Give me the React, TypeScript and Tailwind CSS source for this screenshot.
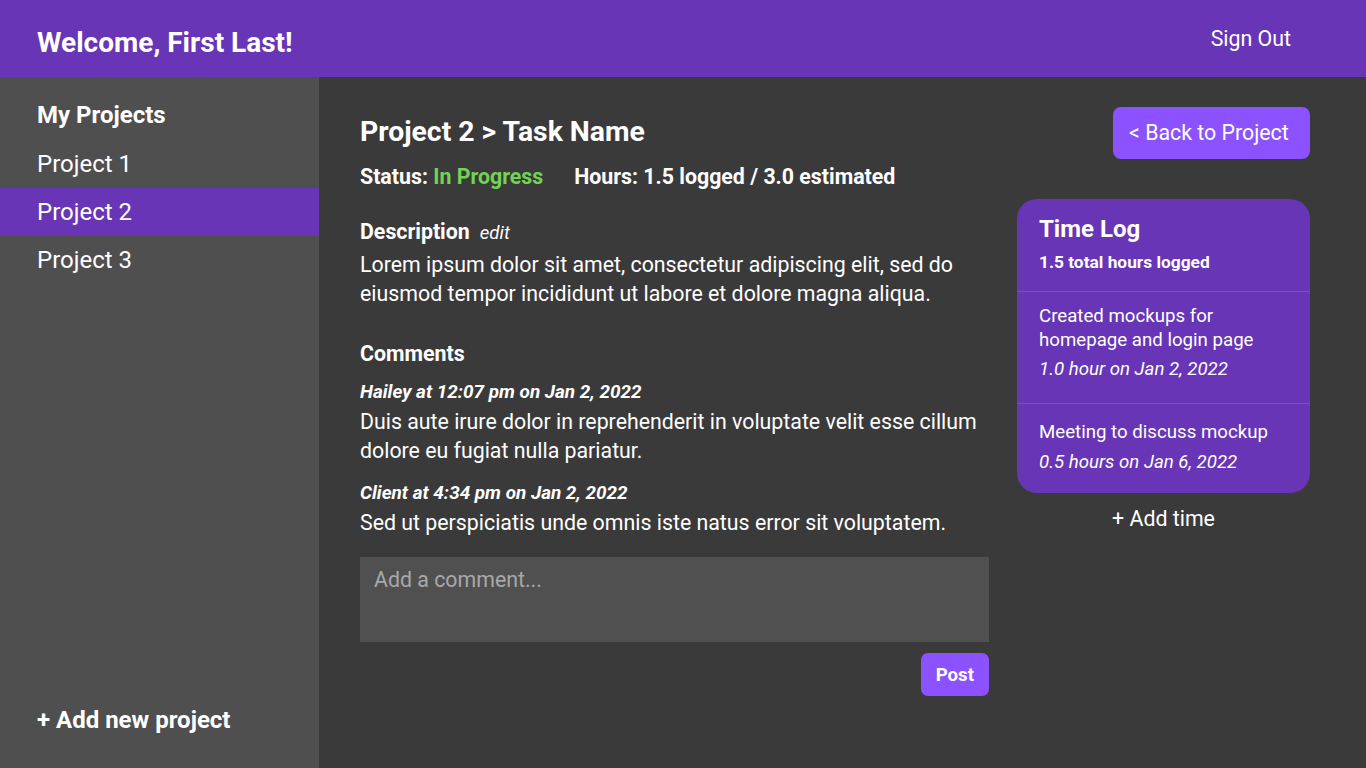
import React from "react";

const projects = ["Project 1", "Project 2", "Project 3"];

const logs = [
  { text: "Created mockups for homepage and login page", meta: "1.0 hour on Jan 2, 2022", pt: "pt-[12px]", pb: "pb-[22px]", gap: "mt-[5px]" },
  { text: "Meeting to discuss mockup", meta: "0.5 hours on Jan 6, 2022", pt: "pt-[16px]", pb: "pb-[19px]", gap: "mt-[6px]" },
];

const comments = [
  { who: "Hailey at 12:07 pm on Jan 2, 2022", body: "Duis aute irure dolor in reprehenderit in voluptate velit esse cillum dolore eu fugiat nulla pariatur." },
  { who: "Client at 4:34 pm on Jan 2, 2022", body: "Sed ut perspiciatis unde omnis iste natus error sit voluptatem." },
];

const App: React.FC = () => {
  return (
    <div className="flex h-[768px] w-[1366px] flex-col overflow-hidden bg-[#3a3a3a] font-['Roboto',sans-serif] text-white">
      {/* HEADER */}
      <header className="flex h-[77px] shrink-0 items-start justify-between bg-[#6735b5] pl-[37px] pr-[75px]">
        <h1 className="mt-[26px] text-[28px] font-bold leading-[34px]">Welcome, First Last!</h1>
        <button className="mt-[25px] text-[21.33px] leading-[28px]">Sign Out</button>
      </header>

      <div className="flex flex-1">
        {/* SIDEBAR */}
        <aside className="flex w-[319px] shrink-0 flex-col justify-between bg-[#4f4f4f] pb-[33px] pt-[23px]">
          <div>
            <div className="px-[37px] pb-[10px] text-[24px] font-bold leading-[30px]">My Projects</div>
            {projects.map((p) => (
              <div
                key={p}
                className={`flex h-[48px] items-center px-[37px] text-[24px] ${p === "Project 2" ? "bg-[#6735b5]" : ""}`}
              >
                {p}
              </div>
            ))}
          </div>
          <div className="px-[37px] text-[24px] font-bold leading-[30px]">+ Add new project</div>
        </aside>

        {/* MAIN */}
        <main className="flex flex-1 gap-[28px] pl-[41px] pr-[56px] pt-[30px]">
          <section className="w-[629px]">
            <div className="text-[28.33px] font-bold leading-[50px]">Project 2 &gt; Task Name</div>
            <div className="mt-[8px] flex gap-[31px] text-[21.33px] font-bold leading-[24px]">
              <span>
                Status: <span className="text-[#72d354]">In Progress</span>
              </span>
              <span>Hours: 1.5 logged / 3.0 estimated</span>
            </div>

            <div className="mt-[31px] flex items-baseline gap-[10px] leading-[24px]">
              <span className="text-[21.33px] font-bold">Description</span>
              <span className="text-[18.67px] italic">edit</span>
            </div>
            <p className="mt-[5px] text-[21.33px] leading-[29px]">
              Lorem ipsum dolor sit amet, consectetur adipiscing elit, sed do eiusmod tempor incididunt ut labore et dolore magna aliqua.
            </p>

            <div className="mt-[34px] text-[21.33px] font-bold leading-[24px]">Comments</div>
            <div className="mt-[14px] flex flex-col gap-[16px]">
              {comments.map((c) => (
                <div key={c.who}>
                  <div className="text-[18.9px] font-bold italic leading-[24px]">{c.who}</div>
                  <p className="mt-[3px] text-[21.33px] leading-[29px]">{c.body}</p>
                </div>
              ))}
            </div>

            <textarea
              placeholder="Add a comment..."
              className="mt-[20px] block h-[85px] w-full resize-none bg-[#505050] px-[14px] py-[10px] text-[21.33px] leading-[26px] text-white outline-none placeholder:text-[#a8a8a8]"
            />
            <div className="mt-[11px] flex justify-end">
              <button className="h-[43px] rounded-[7px] bg-[#8c52ff] px-[15px] text-[18.67px] font-bold">Post</button>
            </div>
          </section>

          <section className="flex w-[293px] flex-col items-end">
            <button className="h-[52px] w-[197px] rounded-[8px] bg-[#8c52ff] pl-[16px] text-left text-[21.33px]">
              &lt; Back to Project
            </button>
            <div className="mt-[40px] w-full overflow-hidden rounded-[20px] bg-[#6735b5]">
              <div className="px-[22px] pb-[19px] pt-[15px]">
                <div className="text-[24px] font-bold leading-[30px]">Time Log</div>
                <div className="mt-[8px] text-[17.33px] font-bold leading-[20px]">1.5 total hours logged</div>
              </div>
              {logs.map((l) => (
                <div key={l.text} className={`border-t border-[#7c4bd6] px-[22px] ${l.pt} ${l.pb}`}>
                  <div className="text-[18.67px] leading-[24px]">{l.text}</div>
                  <div className={`${l.gap} text-[18.67px] italic leading-[24px]`}>{l.meta}</div>
                </div>
              ))}
            </div>
            <div className="mt-[12px] w-full text-center text-[21.33px] leading-[28px]">+ Add time</div>
          </section>
        </main>
      </div>
    </div>
  );
};

export default App;
